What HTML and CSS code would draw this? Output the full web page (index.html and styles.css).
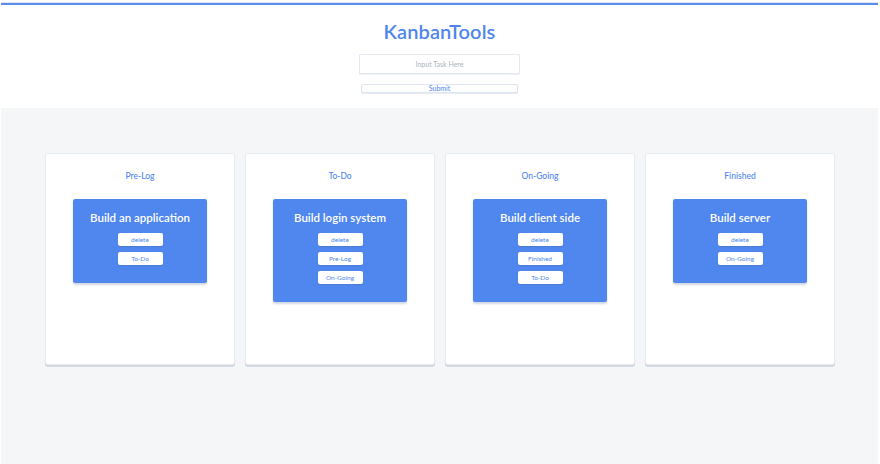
FILE: index.html
```html
<!DOCTYPE html>
<html>
<head>
<meta charset="utf-8">
<link rel="stylesheet" href="styles.css">
</head>
<body>
<div class="page">
  <header class="header">
    <h1 class="title">KanbanTools</h1>
    <input class="task-input" type="text" placeholder="Input Task Here">
    <button class="submit">Submit</button>
  </header>
  <main class="board">
    <section class="column">
      <h2 class="col-title">Pre-Log</h2>
      <div class="card">
        <h3 class="card-title">Build an application</h3>
        <button class="card-btn">delete</button>
        <button class="card-btn">To-Do</button>
      </div>
    </section>
    <section class="column">
      <h2 class="col-title">To-Do</h2>
      <div class="card">
        <h3 class="card-title">Build login system</h3>
        <button class="card-btn">delete</button>
        <button class="card-btn">Pre-Log</button>
        <button class="card-btn">On-Going</button>
      </div>
    </section>
    <section class="column">
      <h2 class="col-title">On-Going</h2>
      <div class="card">
        <h3 class="card-title">Build client side</h3>
        <button class="card-btn">delete</button>
        <button class="card-btn">Finished</button>
        <button class="card-btn">To-Do</button>
      </div>
    </section>
    <section class="column">
      <h2 class="col-title">Finished</h2>
      <div class="card">
        <h3 class="card-title">Build server</h3>
        <button class="card-btn">delete</button>
        <button class="card-btn">On-Going</button>
      </div>
    </section>
  </main>
</div>
</body>
</html>
```

FILE: styles.css
```css
* { box-sizing: border-box; }
html, body { margin: 0; padding: 0; background: #ffffff; }
body { font-family: Lato, "Open Sans", sans-serif; }

.page {
  margin: 3px 2px 0 1px;
  border-top: 2px solid #5b8def;
  box-shadow: 0 -1px 0 #dfe6f3;
}

.header {
  height: 103px;
  display: flex;
  flex-direction: column;
  align-items: center;
  background: #fff;
}

.title {
  margin: 14px 0 0;
  height: 24px;
  line-height: 24px;
  font-size: 20px;
  font-weight: 600;
  color: #4f86ec;
  letter-spacing: 0.1px;
}

.task-input {
  margin-top: 11px;
  width: 161px;
  height: 20px;
  border: 1px solid #e3e8f2;
  border-radius: 1px;
  background: #fff;
  font-family: Lato, sans-serif;
  font-size: 7px;
  text-align: center;
  color: #555;
  outline: none;
  padding: 0;
  box-shadow: 0 1px 0 #eef1f6;
}
.task-input::placeholder { color: #aeb3bb; }

.submit {
  margin-top: 10px;
  width: 157px;
  height: 9px;
  padding: 0;
  border: 1px solid #dfe5f0;
  border-radius: 2px;
  background: #fff;
  font-family: Lato, sans-serif;
  font-size: 7px;
  line-height: 7px;
  color: #4f86ec;
  box-shadow: 0 1px 0 #e6ebf4;
}

.board {
  height: 359px;
  background: #f5f6f8;
  display: flex;
  justify-content: center;
  align-items: flex-start;
  gap: 10px;
  padding-top: 45px;
  padding-left: 1px;
}

.column {
  width: 190px;
  height: 212px;
  background: #fff;
  border: 1px solid #e6ebf3;
  border-radius: 3px;
  box-shadow: 0 2px 0 #d5d9e0;
  display: flex;
  flex-direction: column;
  align-items: center;
}

.col-title {
  margin: 16px 0 0;
  height: 12px;
  line-height: 12px;
  font-size: 8.5px;
  font-weight: 500;
  color: #4f86ec;
}

.card {
  margin-top: 17px;
  width: 134px;
  background: #5087ee;
  border-radius: 2px;
  box-shadow: 0 2px 2px rgba(80, 100, 140, 0.25);
  display: flex;
  flex-direction: column;
  align-items: center;
  padding: 11px 0 12px;
}

.card-title {
  margin: 0 0 8px;
  height: 15px;
  line-height: 15px;
  font-size: 11.5px;
  font-weight: 600;
  color: #ffffff;
}

.card-btn {
  width: 45px;
  height: 13px;
  margin-bottom: 6px;
  padding: 0;
  border: none;
  border-radius: 2px;
  background: #fff;
  font-family: Lato, sans-serif;
  font-size: 6.5px;
  color: #4f86ec;
  box-shadow: 0 1px 1px rgba(60, 80, 120, 0.2);
}
```
